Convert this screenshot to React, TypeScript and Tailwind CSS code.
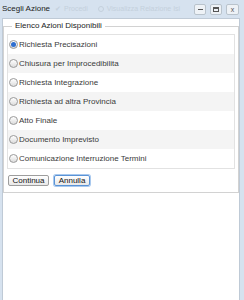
import { useState } from 'react';

const azioni = [
  'Richiesta Precisazioni',
  'Chiusura per Improcedibilita',
  'Richiesta Integrazione',
  'Richiesta ad altra Provincia',
  'Atto Finale',
  'Documento Imprevisto',
  'Comunicazione Interruzione Termini',
];

const Radio = ({ checked }: { checked: boolean }) => (
  <span className="flex h-[9px] w-[9px] shrink-0 items-center justify-center rounded-full border border-[#9a9a9a] bg-gradient-to-b from-white to-[#dcdcdc]">
    {checked && <span className="h-[5px] w-[5px] rounded-full bg-[#2f6fd0]" />}
  </span>
);

export default function App() {
  const [selected, setSelected] = useState(0);

  return (
    <div
      className="flex h-[300px] w-[244px] flex-col overflow-hidden bg-[#d6e2ef] text-[#333]"
      style={{ fontFamily: '"Liberation Sans", Arial, sans-serif' }}
    >
      {/* title bar, with the toolbar ghosting through behind it */}
      <div className="flex h-[18px] shrink-0 items-center pl-[2px] pr-[5px]">
        <span className="shrink-0 whitespace-nowrap text-[8px] text-[#222]">Scegli Azione</span>
        <div className="flex min-w-0 flex-1 items-center whitespace-nowrap text-[7px] text-[#c4d0dc]">
          <span className="ml-[5px]">✔</span>
          <span className="ml-[3px]">Procedi</span>
          <span className="ml-[10px] h-[6px] w-[6px] shrink-0 rounded-full border border-[#c4d0dc]" />
          <span className="ml-[3px]">Visualizza Relazione Isi</span>
        </div>
        <div className="ml-[2px] flex shrink-0 gap-[4px]">
          <button className="flex h-[11px] w-[12px] items-center justify-center rounded-[2px] border border-[#b9c3cc] bg-[#eef2f6]">
            <span className="h-[1px] w-[5px] bg-[#555]" />
          </button>
          <button className="flex h-[11px] w-[12px] items-center justify-center rounded-[2px] border border-[#b9c3cc] bg-[#eef2f6]">
            <span className="h-[5px] w-[6px] border border-t-2 border-[#555]" />
          </button>
          <button className="flex h-[11px] w-[13px] items-center justify-center rounded-[2px] border border-[#b9c3cc] bg-[#eef2f6] text-[7px] leading-none text-[#555]">
            x
          </button>
        </div>
      </div>

      {/* window body */}
      <div className="ml-[2px] mr-[4px] flex-1 border-l border-r border-t border-[#bfcad6] bg-white pt-[2px]">
        <fieldset className="border border-[#d2d2d2] px-[3px] pb-[6px]">
          <legend className="ml-[5px] px-[3px] text-[8px] leading-[10px] text-[#222]">
            Elenco Azioni Disponibili
          </legend>
          <div className="mt-[3px] border border-[#e2e2e2]">
            {azioni.map((a, i) => (
              <div
                key={a}
                onClick={() => setSelected(i)}
                className={`flex h-[19px] items-center gap-[1px] pl-[1px] ${i % 2 === 1 ? 'bg-[#f4f4f4]' : 'bg-white'}`}
              >
                <Radio checked={selected === i} />
                <span className="whitespace-nowrap text-[8px] text-[#3a3a3a]">{a}</span>
              </div>
            ))}
          </div>
          <div className="mt-[6px] flex gap-[5px] pl-[1px]">
            <button className="h-[11px] w-[41px] rounded-[2px] border border-[#9d9d9d] bg-gradient-to-b from-white to-[#e8e8e8] text-[8px] leading-none text-[#111]">
              Continua
            </button>
            <button className="h-[11px] w-[36px] rounded-[2px] border border-[#5a93d6] bg-gradient-to-b from-white to-[#e8e8e8] text-[8px] leading-none text-[#111] shadow-[0_0_0_1px_#a9c9ee]">
              Annulla
            </button>
          </div>
        </fieldset>
      </div>
    </div>
  );
}
